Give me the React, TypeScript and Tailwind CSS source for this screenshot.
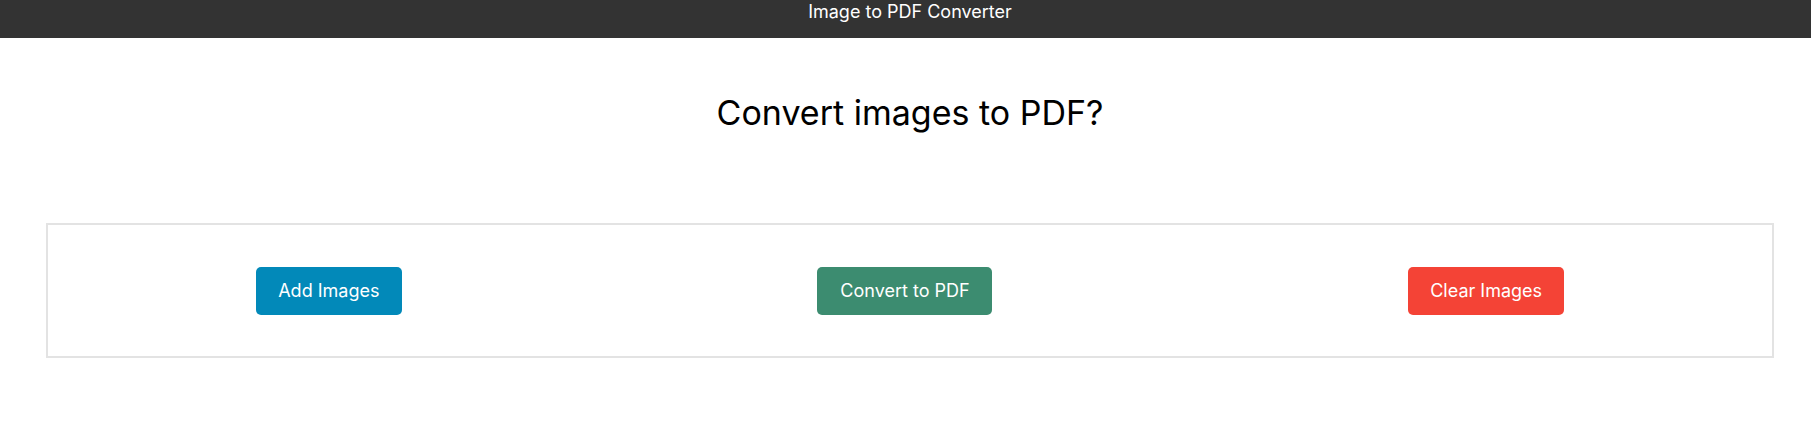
export default function App() {
  return (
    <div className="w-full overflow-hidden bg-white min-h-[435px]" style={{ fontFamily: 'Inter, "Noto Sans", sans-serif' }}>
      <div className="w-[1820px]">
        <header className="h-[38px] bg-[#333333] text-white text-center text-[18px] leading-[24px]">
          Image to PDF Converter
        </header>
        <h1 className="mt-[51px] text-center text-[34px] leading-[48px] font-normal text-black">
          Convert images to PDF?
        </h1>
        <div className="mx-[46px] mt-[86px] h-[135px] border-2 border-[#e3e3e3] flex items-center justify-around">
          <button className="h-[48px] w-[146px] rounded-[5px] bg-[#0289b9] text-white text-[18px]">
            Add Images
          </button>
          <button className="h-[48px] w-[175px] rounded-[5px] bg-[#3c8c70] text-white text-[18px]">
            Convert to PDF
          </button>
          <button className="h-[48px] w-[156px] rounded-[5px] bg-[#f44336] text-white text-[18px]">
            Clear Images
          </button>
        </div>
      </div>
    </div>
  );
}
